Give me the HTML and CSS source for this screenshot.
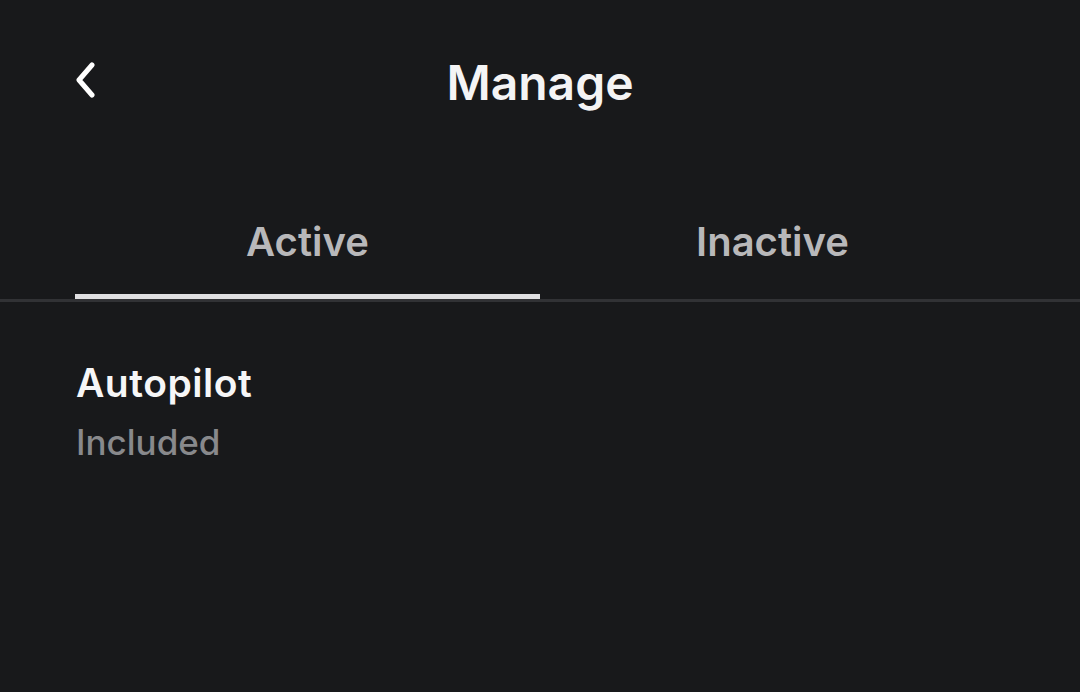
FILE: index.html
```html
<!DOCTYPE html>
<html>
<head>
<meta charset="utf-8">
<link rel="stylesheet" href="styles.css">
</head>
<body>
<div class="screen">
  <header class="header">
    <button class="back" aria-label="Back">
      <svg width="22" height="36" viewBox="0 0 22 36"><path d="M17 3 L4 18 L17 33" fill="none" stroke="#ffffff" stroke-width="5" stroke-linecap="round" stroke-linejoin="round"/></svg>
    </button>
    <h1 class="title">Manage</h1>
  </header>
  <nav class="tabs">
    <div class="tab active">Active</div>
    <div class="tab">Inactive</div>
  </nav>
  <section class="list">
    <div class="item">
      <div class="item-title">Autopilot</div>
      <div class="item-sub">Included</div>
    </div>
  </section>
</div>
</body>
</html>
```
FILE: styles.css
```css
html, body {
  margin: 0;
  padding: 0;
  background: #18191b;
}
body {
  font-family: "Inter", "Noto Sans", sans-serif;
  width: 1080px;
  height: 692px;
  overflow: hidden;
}
.screen {
  display: flex;
  flex-direction: column;
}
.header {
  position: relative;
  height: 164px;
  display: flex;
  align-items: flex-start;
  justify-content: center;
}
.back {
  position: absolute;
  left: 75px;
  top: 62px;
  background: none;
  border: 0;
  padding: 0;
  width: 22px;
  height: 36px;
}
.back svg { display: block; }
.title {
  margin: 0;
  padding-top: 53px;
  font-size: 48px;
  line-height: 60px;
  font-weight: 600;
  color: #f4f4f5;
  letter-spacing: 0;
}
.tabs {
  display: flex;
  padding: 0 75px;
  border-bottom: 3px solid #313235;
  height: 138px;
  box-sizing: border-box;
}
.tab {
  flex: 1;
  text-align: center;
  font-size: 40px;
  line-height: 50px;
  padding-top: 53px;
  font-weight: 600;
  color: #b8b8ba;
  box-sizing: border-box;
  position: relative;
}
.tab.active::after {
  content: "";
  position: absolute;
  left: 0;
  right: 0;
  bottom: 0;
  height: 5px;
  background: #dfdfe1;
}
.list {
  padding: 58px 76px;
}
.item-title {
  font-size: 39px;
  line-height: 46px;
  font-weight: 600;
  color: #f6f6f7;
  letter-spacing: 0.5px;
}
.item-sub {
  margin-top: 16px;
  font-size: 35px;
  line-height: 40px;
  font-weight: 500;
  color: #88898c;
}
```
